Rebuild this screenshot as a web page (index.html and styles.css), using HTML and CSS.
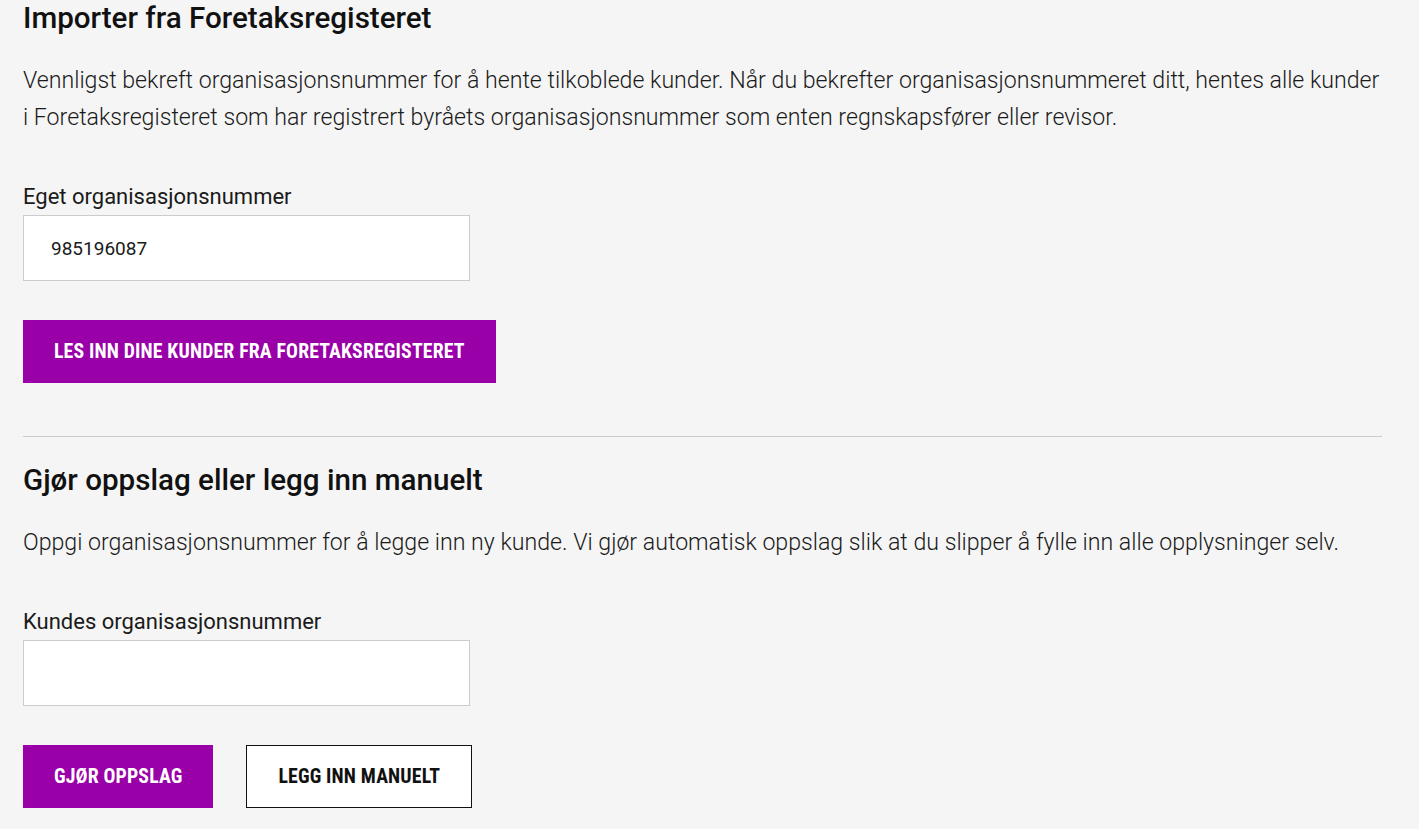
FILE: index.html
```html
<!DOCTYPE html>
<html lang="no">
<head>
<meta charset="utf-8">
<title>Importer fra Foretaksregisteret</title>
<link rel="stylesheet" href="styles.css">
</head>
<body>
<main class="page">
  <section class="section">
    <h2 class="title">Importer fra Foretaksregisteret</h2>
    <p class="lead">Vennligst bekreft organisasjonsnummer for å hente tilkoblede kunder. Når du bekrefter organisasjonsnummeret ditt, hentes alle kunder i Foretaksregisteret som har registrert byråets organisasjonsnummer som enten regnskapsfører eller revisor.</p>
    <label class="label" for="own">Eget organisasjonsnummer</label>
    <input class="field" id="own" type="text" value="985196087">
    <div class="actions">
      <button class="btn btn-primary" type="button">Les inn dine kunder fra Foretaksregisteret</button>
    </div>
  </section>
  <hr class="divider">
  <section class="section">
    <h2 class="title">Gjør oppslag eller legg inn manuelt</h2>
    <p class="lead">Oppgi organisasjonsnummer for å legge inn ny kunde. Vi gjør automatisk oppslag slik at du slipper å fylle inn alle opplysninger selv.</p>
    <label class="label" for="cust">Kundes organisasjonsnummer</label>
    <input class="field" id="cust" type="text" value="">
    <div class="actions">
      <button class="btn btn-primary" type="button">Gjør oppslag</button>
      <button class="btn btn-outline" type="button">Legg inn manuelt</button>
    </div>
  </section>
</main>
</body>
</html>
```
FILE: styles.css
```css
* { box-sizing: border-box; }
html, body {
  margin: 0;
  padding: 0;
  background: #f5f5f5;
}
body {
  font-family: Roboto, "Liberation Sans", sans-serif;
  color: #1a1a1a;
}
.page {
  width: 1382px;
  padding-left: 23px;
}
.section {
  display: flex;
  flex-direction: column;
  align-items: flex-start;
}
.title {
  margin: 0;
  font-size: 29.6px;
  line-height: 36px;
  font-weight: 500;
  color: #111;
}
.lead {
  margin: 26px 0 0;
  font-size: 23.15px;
  line-height: 37px;
  font-weight: 300;
  color: #1a1a1a;
}
.label {
  margin-top: 49px;
  font-size: 22px;
  line-height: 24px;
  font-weight: 400;
  color: #1a1a1a;
}
.field {
  margin-top: 6px;
  width: 447px;
  height: 66px;
  border: 1px solid #cccccc;
  background: #fff;
  padding: 0 27px;
  font-family: Roboto, "Liberation Sans", sans-serif;
  font-size: 19px;
  color: #1a1a1a;
  outline: none;
}
.actions {
  margin-top: 39px;
  display: flex;
  gap: 33px;
}
.btn {
  height: 63px;
  padding: 0 31px;
  font-family: "Liberation Sans Narrow", "Roboto Condensed", Roboto, sans-serif;
  font-size: 19.8px;
  font-weight: 700;
  text-transform: uppercase;
  letter-spacing: 0.15px;
  cursor: pointer;
}
.btn-primary {
  background: #9900a8;
  color: #fff;
  border: none;
}
.btn-outline {
  background: #fff;
  color: #111;
  border: 1px solid #111;
}
.divider {
  margin: 53px 0 25px;
  width: 1359px;
  border: 0;
  border-top: 1px solid #cccccc;
  height: 0;
}
```
